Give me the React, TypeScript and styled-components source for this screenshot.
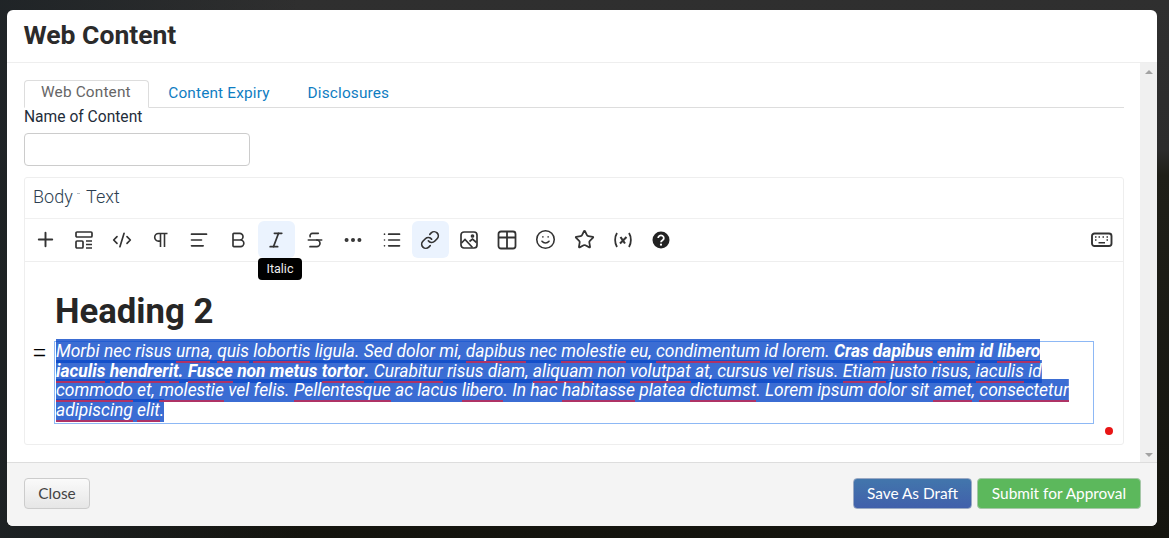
import React from 'react';
import styled, { createGlobalStyle } from 'styled-components';
import { Plus, CodeXml, AlignLeft, Bold, Italic, Strikethrough, MoreHorizontal, List, Link, Smile, Star } from 'lucide-react';

const GlobalStyle = createGlobalStyle`
  html, body {
    margin: 0;
    height: 100%;
    font-family: Roboto, "Liberation Sans", sans-serif;
  }
`;

const Backdrop = styled.div`
  width: 1169px;
  height: 538px;
  padding: 10px 12px 12px 7px;
  box-sizing: border-box;
  overflow: hidden;
  background:
    linear-gradient(90deg, rgba(30, 35, 38, 0.9) 0, rgba(30, 35, 38, 0) 300px),
    linear-gradient(#2f2f2f 0, #2c2c2c 150px, #1f1f18 175px, #14140e 100%);
`;

const Modal = styled.div`
  width: 1150px;
  height: 516px;
  background: #fff;
  border-radius: 6px;
  display: flex;
  flex-direction: column;
  overflow: hidden;
`;

const Header = styled.div`
  height: 53px;
  box-sizing: border-box;
  padding: 10px 16.5px 0;
  border-bottom: 1px solid #eeeeee;
  flex: none;
`;

const Title = styled.h4`
  margin: 0;
  font-size: 26.5px;
  line-height: 30px;
  font-weight: 700;
  color: #2b2b2b;
`;

const Middle = styled.div`
  flex: 1;
  display: flex;
  min-height: 0;
`;

const Content = styled.div`
  flex: 1;
  padding: 17px 16px 0 17px;
  min-width: 0;
`;

const Scrollbar = styled.div`
  width: 17px;
  flex: none;
  background: #f0f0f0;
  display: flex;
  flex-direction: column;
  justify-content: space-between;
  align-items: center;
  padding: 7px 0 5px;
  box-sizing: border-box;
`;

const Arrow = styled.div<{ $down?: boolean }>`
  width: 0;
  height: 0;
  border-left: 4px solid transparent;
  border-right: 4px solid transparent;
  ${(p) => (p.$down ? 'border-top: 4px solid #a3a3a3;' : 'border-bottom: 4px solid #a3a3a3;')}
`;

const Tabs = styled.div`
  display: flex;
  height: 28px;
  box-sizing: border-box;
  border-bottom: 1px solid #dddddd;
`;

const Tab = styled.div<{ $active?: boolean }>`
  height: 27px;
  padding: 0 19px;
  font-size: 15.4px;
  letter-spacing: 0.15px;
  line-height: 26px;
  color: #0f7dc2;
  ${(p) =>
    p.$active
      ? `padding: 0 17.5px 0 16px; color: #666666; line-height: 23px; border: 1px solid #dddddd; border-bottom: 1px solid #fff; border-radius: 4px 4px 0 0; height: 28px; box-sizing: border-box;`
      : ''}
`;

const FieldLabel = styled.label`
  display: block;
  font-size: 15.6px;
  line-height: 18px;
  color: #1f2d3a;
`;

const TextInput = styled.input`
  display: block;
  margin-top: 7px;
  width: 226px;
  height: 33px;
  box-sizing: border-box;
  border: 1px solid #cccccc;
  border-radius: 4px;
  background: #fff;
`;

const Editor = styled.div`
  margin-top: 11px;
  height: 268px;
  box-sizing: border-box;
  border: 1px solid #eeeeee;
  border-radius: 3px;
  display: flex;
  flex-direction: column;
  position: relative;
`;

const EditorTitle = styled.div`
  height: 41px;
  box-sizing: border-box;
  padding: 0 8px;
  font-size: 18px;
  font-weight: 300;
  line-height: 38px;
  color: #2c3e50;
  border-bottom: 1px solid #f0f0f0;
  white-space: pre;
`;

const TitleDash = styled.span`
  display: inline-block;
  width: 3px;
  height: 1px;
  margin-right: 2px;
  vertical-align: 9px;
  background: #b5bcc4;
`;

const Toolbar = styled.div`
  height: 43px;
  box-sizing: border-box;
  padding: 2px 2px 3px 2px;
  display: flex;
  align-items: flex-start;
  border-bottom: 1px solid #eeeeee;
  position: relative;
`;

const ToolButton = styled.div<{ $on?: boolean; $last?: boolean }>`
  width: 37px;
  height: 37px;
  box-sizing: border-box;
  padding-right: 1px;
  margin-right: 1.5px;
  ${(p) => (p.$last ? 'margin-left: auto; margin-right: 0;' : '')}
  border-radius: 6px;
  display: flex;
  align-items: center;
  justify-content: center;
  color: #333333;
  background: ${(p) => (p.$on ? '#ebf3fe' : 'transparent')};
`;

const Tooltip = styled.div`
  position: absolute;
  left: 233px;
  top: 39px;
  height: 22px;
  width: 44px;
  border-radius: 4px;
  background: #000;
  color: #eeeeee;
  font-size: 12.5px;
  line-height: 21px;
  text-align: center;
  z-index: 2;
`;

const Body = styled.div`
  flex: 1;
  padding: 30px 0 0 29px;
  position: relative;
`;

const Heading = styled.h2`
  margin: 0 0 0 1px;
  font-size: 34.7px;
  line-height: 38px;
  font-weight: 700;
  color: #262626;
`;

const Paragraph = styled.div`
  width: 1040px;
  height: 83px;
  box-sizing: border-box;
  border: 1px solid #8db8f5;
  margin-top: 11px;
  padding-left: 1px;
  position: relative;
`;

const Handle = styled.span`
  position: absolute;
  left: -23px;
  top: -4px;
  font-size: 27px;
  line-height: 30px;
  font-weight: 300;
  color: #000;
`;

const Line = styled.div`
  width: fit-content;
  height: 24px;
  margin-bottom: -4.4px;
  font-size: 17.4px;
  line-height: 25px;
  font-style: italic;
  white-space: pre;
  color: #fff;
  background: linear-gradient(rgba(10, 72, 200, 0.8), rgba(10, 72, 200, 0.8)) no-repeat bottom / 100% 23px;
  position: relative;
  &:first-of-type {
    margin-top: -3px;
    background-size: 100% 100%;
  }
`;

const Wrong = styled.span`
  display: inline-block;
  height: 24px;
  vertical-align: top;
  box-shadow: inset 0 -2px 0 #ae3366;
  position: relative;
  z-index: 1;
`;

const RedDot = styled.div`
  position: absolute;
  right: 10px;
  bottom: 9px;
  width: 8px;
  height: 8px;
  border-radius: 50%;
  background: #e81515;
`;

const Footer = styled.div`
  height: 64px;
  flex: none;
  box-sizing: border-box;
  background: #f4f4f4;
  border-top: 1px solid #dddddd;
  padding: 15px 16px 0 17px;
  display: flex;
`;

const Button = styled.button<{ $kind: 'plain' | 'blue' | 'green' }>`
  height: 31px;
  box-sizing: border-box;
  border-radius: 4px;
  font-family: Lato, sans-serif;
  font-size: 15.4px;
  padding: 0 0 2px;
  border: 1px solid ${(p) => (p.$kind === 'plain' ? '#cccccc' : p.$kind === 'blue' ? '#9aa9c4' : '#a5c7a7')};
  color: ${(p) => (p.$kind === 'plain' ? '#444444' : '#ffffff')};
  width: ${(p) => (p.$kind === 'plain' ? '66px' : p.$kind === 'blue' ? '119px' : '164px')};
  margin-left: ${(p) => (p.$kind === 'blue' ? 'auto' : p.$kind === 'green' ? '5px' : '0')};
  background: ${(p) =>
    p.$kind === 'plain'
      ? 'linear-gradient(#fafafa, #e6e6e6)'
      : p.$kind === 'blue'
      ? 'linear-gradient(#4276ac, #4160ab)'
      : '#5cb85c'};
`;

const ICON = { size: 20, strokeWidth: 2 };

const App: React.FC = () => {
  return (
    <Backdrop>
      <GlobalStyle />
      <Modal>
        <Header>
          <Title>Web Content</Title>
        </Header>
        <Middle>
          <Content>
            <Tabs>
              <Tab $active>Web Content</Tab>
              <Tab>Content Expiry</Tab>
              <Tab>Disclosures</Tab>
            </Tabs>
            <FieldLabel>Name of Content</FieldLabel>
            <TextInput />
            <Editor>
              <EditorTitle>Body <TitleDash /> Text</EditorTitle>
              <Toolbar>
                <ToolButton><Plus size={23} strokeWidth={2} /></ToolButton>
                <ToolButton>
                  <svg width="20" height="20" viewBox="0 0 20 20" fill="none" stroke="currentColor" strokeWidth="1.7">
                    <rect x="2" y="2" width="16" height="5" rx="1" />
                    <rect x="2" y="11" width="7" height="7" rx="1" />
                    <path d="M12 11h6M12 14.5h6M12 18h6" />
                  </svg>
                </ToolButton>
                <ToolButton><CodeXml {...ICON} /></ToolButton>
                <ToolButton>
                  <svg width="20" height="20" viewBox="0 0 20 20" fill="none" stroke="currentColor" strokeWidth="1.6">
                    <path d="M16.5 3.5H7.5a3.8 3.8 0 0 0 0 7.6H9.5V3.5M9.5 11v6M13.5 3.5V17" />
                  </svg>
                </ToolButton>
                <ToolButton><AlignLeft {...ICON} /></ToolButton>
                <ToolButton><Bold {...ICON} /></ToolButton>
                <ToolButton $on><Italic {...ICON} /></ToolButton>
                <ToolButton><Strikethrough {...ICON} /></ToolButton>
                <ToolButton><MoreHorizontal size={22} strokeWidth={2.4} /></ToolButton>
                <ToolButton><List {...ICON} /></ToolButton>
                <ToolButton $on><Link {...ICON} /></ToolButton>
                <ToolButton>
                  <svg width="20" height="20" viewBox="0 0 20 20" fill="none" stroke="currentColor" strokeWidth="1.7">
                    <rect x="2" y="2" width="16" height="16" rx="3" />
                    <path d="M2.5 13l3.5-3.5 7.5 8M10.5 11.5l3-2.5 4 3.5" />
                    <circle cx="13.5" cy="6" r="1" />
                  </svg>
                </ToolButton>
                <ToolButton>
                  <svg width="20" height="20" viewBox="0 0 20 20" fill="none" stroke="currentColor" strokeWidth="1.8">
                    <rect x="1.5" y="1.5" width="17" height="17" rx="2.5" />
                    <path d="M1.5 7.5h17M10 1.5v17" />
                  </svg>
                </ToolButton>
                <ToolButton><Smile size={21} strokeWidth={1.8} /></ToolButton>
                <ToolButton><Star size={21} strokeWidth={2} /></ToolButton>
                <ToolButton>
                  <svg width="20" height="20" viewBox="0 0 20 20" fill="none" stroke="currentColor" strokeWidth="1.8">
                    <path d="M4 3c-2.5 4-2.5 10 0 14M16 3c2.5 4 2.5 10 0 14" />
                    <path d="M7.5 7l4.5 6.5M13.5 7l-6.5 6.5" strokeWidth="2.1" />
                  </svg>
                </ToolButton>
                <ToolButton>
                  <svg width="20" height="20" viewBox="0 0 20 20">
                    <circle cx="10" cy="10" r="8.5" fill="#222" />
                    <path d="M7.2 8a2.8 2.6 0 1 1 4.3 2.2c-1 .6-1.5 1-1.5 2" fill="none" stroke="#fff" strokeWidth="1.8" />
                    <circle cx="10" cy="14.7" r="1.1" fill="#fff" />
                  </svg>
                </ToolButton>
                <ToolButton $last>
                  <svg width="22" height="16" viewBox="0 0 22 16" fill="none" stroke="currentColor">
                    <rect x="1" y="1.5" width="19.5" height="12.5" rx="2.5" strokeWidth="1.9" />
                    <path d="M4 5h1.5M7.5 5H9M11.5 5H13M15.5 5H17M4 8h1.5M15.5 8H17M7.5 10.7h6.5" strokeWidth="1.6" />
                  </svg>
                </ToolButton>
                <Tooltip>Italic</Tooltip>
              </Toolbar>
              <Body>
                <Heading>Heading 2</Heading>
                <Paragraph>
                  <Handle>=</Handle>
                  <Line>Morbi nec risus <Wrong>urna</Wrong>, <Wrong>quis</Wrong> <Wrong>lobortis</Wrong> ligula. Sed dolor mi, <Wrong>dapibus</Wrong> nec <Wrong>molestie</Wrong> eu, <Wrong>condimentum</Wrong> id lorem. <strong>Cras <Wrong>dapibus</Wrong> <Wrong>enim</Wrong> id <Wrong>libero</Wrong></strong></Line>
                  <Line><strong><Wrong>iaculis</Wrong> <Wrong>hendrerit</Wrong>. <Wrong>Fusce</Wrong> non metus <Wrong>tortor</Wrong>.</strong> <Wrong>Curabitur</Wrong> risus diam, <Wrong>aliquam</Wrong> non <Wrong>volutpat</Wrong> at, cursus vel risus. <Wrong>Etiam</Wrong> justo risus, <Wrong>iaculis</Wrong> id</Line>
                  <Line><Wrong>commodo</Wrong> et, <Wrong>molestie</Wrong> vel felis. <Wrong>Pellentesque</Wrong> ac lacus <Wrong>libero</Wrong>. In hac <Wrong>habitasse</Wrong> platea <Wrong>dictumst</Wrong>. Lorem ipsum dolor sit <Wrong>amet</Wrong>, <Wrong>consectetur</Wrong></Line>
                  <Line><Wrong>adipiscing</Wrong> <Wrong>elit</Wrong>.</Line>
                </Paragraph>
                <RedDot />
              </Body>
            </Editor>
          </Content>
          <Scrollbar>
            <Arrow />
            <Arrow $down />
          </Scrollbar>
        </Middle>
        <Footer>
          <Button $kind="plain">Close</Button>
          <Button $kind="blue">Save As Draft</Button>
          <Button $kind="green">Submit for Approval</Button>
        </Footer>
      </Modal>
    </Backdrop>
  );
};

export default App;
